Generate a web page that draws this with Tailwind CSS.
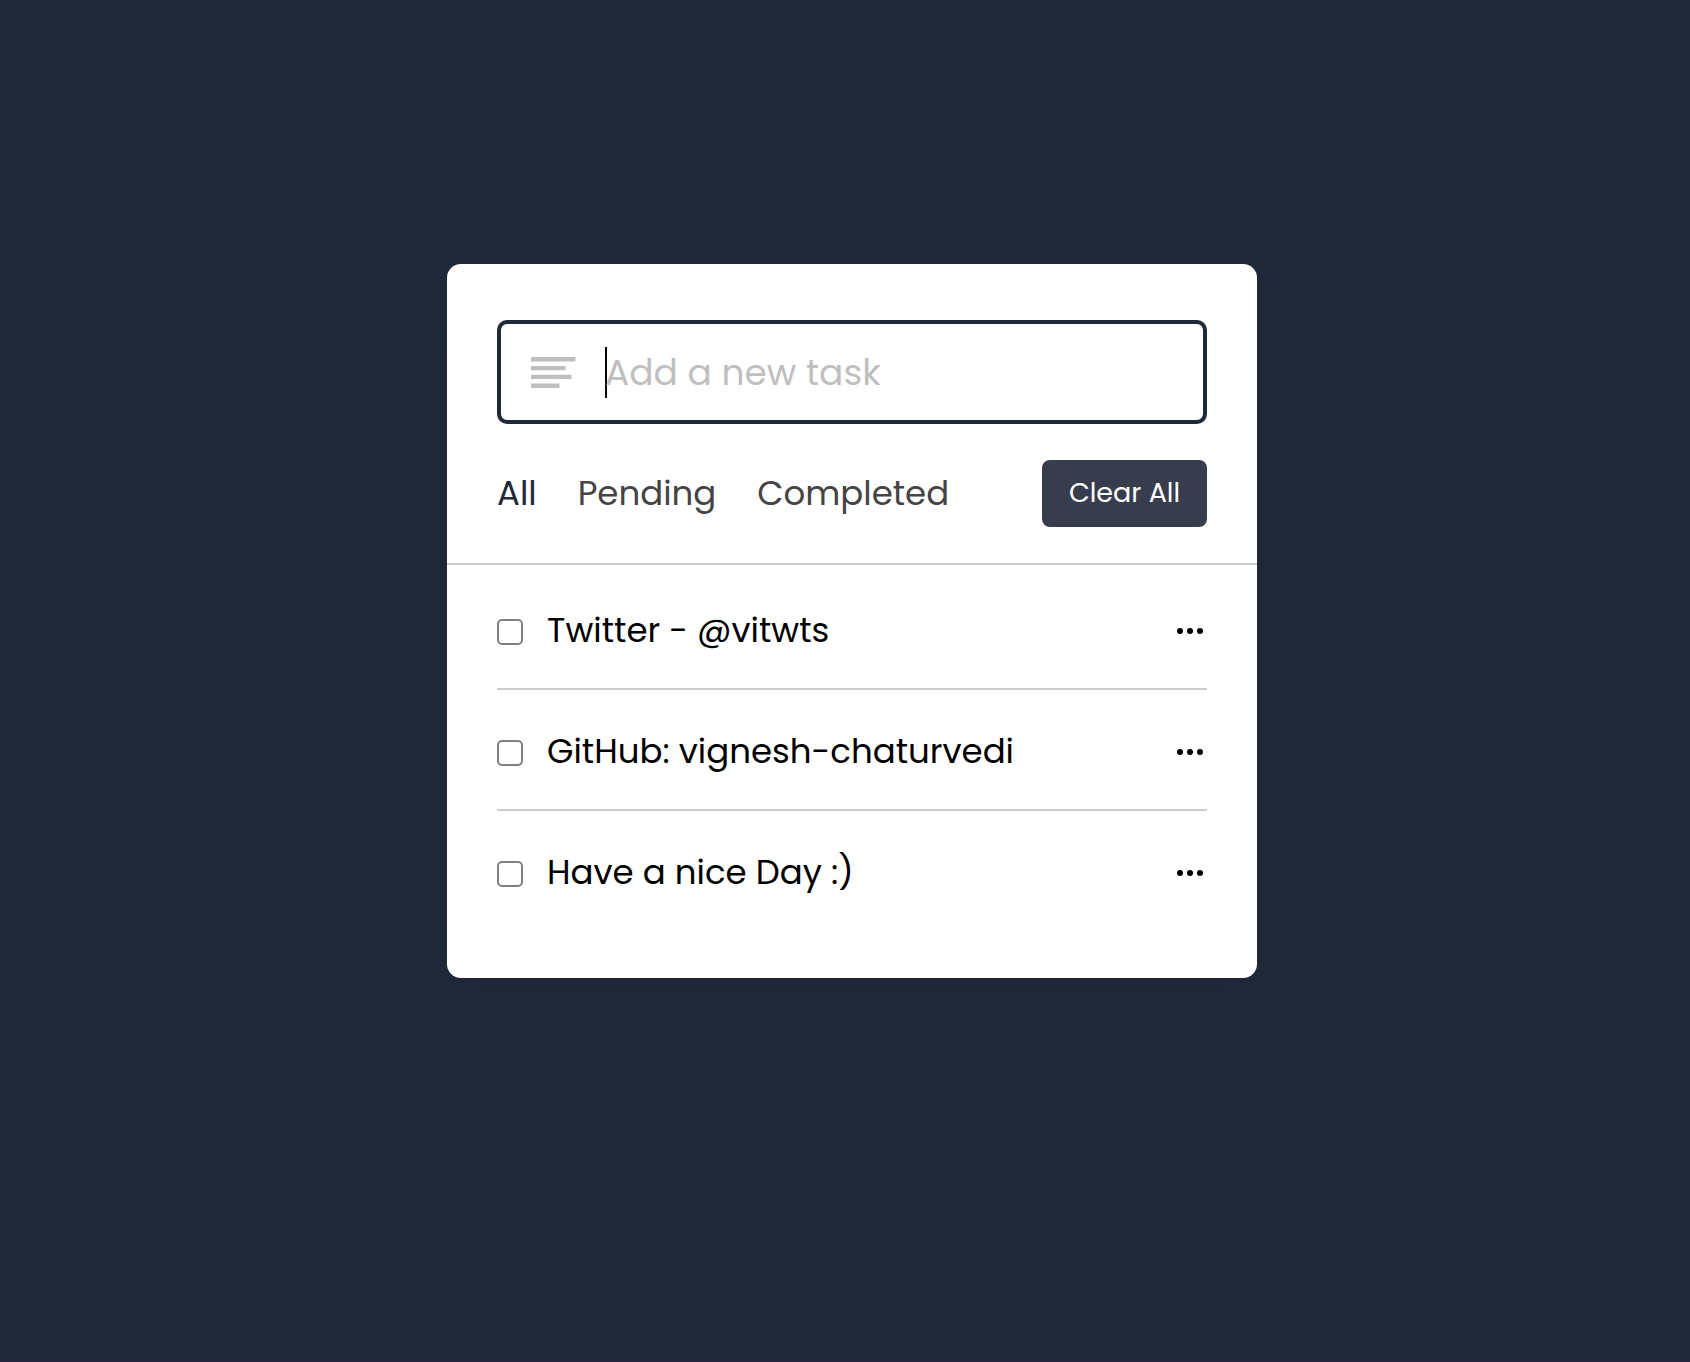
<!DOCTYPE html>
<html lang="en">
<head>
<meta charset="utf-8">
<meta name="viewport" content="width=device-width, initial-scale=1">
<title>Todo List</title>
<script src="https://cdn.jsdelivr.net/npm/@tailwindcss/browser@4"></script>
</head>
<body class="min-h-screen border-b-2 border-[#24243a] bg-[#20293a] font-['Poppins','Inter',sans-serif]">
<main class="flex justify-center pt-[264px] pb-16 pl-[14px]">
  <section class="w-full max-w-[810px] rounded-[14px] bg-white pt-14 pb-[46px] shadow-[0_20px_60px_rgba(0,0,0,0.06)]">
    <div class="px-[50px]">
      <label class="flex h-[104px] items-center rounded-[10px] border-4 border-[#20293a] pl-[30px]">
        <svg class="h-8 w-[45px] shrink-0" viewBox="0 0 45 32" fill="#bfbfbf" aria-hidden="true">
          <path d="M0 1h44.500v4.500H0zM0 10h34.500v4.300H0zM0 18.700h40.500v4.300H0zM0 27.500h28.500v4.500H0z"/>
        </svg>
        <span class="-mr-0.5 ml-[29px] h-[51px] w-0.5 shrink-0 bg-black" aria-hidden="true"></span>
        <input type="text" aria-label="New task" placeholder="Add a new task" class="h-full min-w-0 flex-1 text-[36px] text-black outline-none placeholder:text-[#bfbfbf]">
      </label>
    </div>
    <div class="flex items-center justify-between border-b-2 border-[#cccccc] px-[50px] py-9">
      <div class="flex gap-[41px] text-[34px] leading-[51px] text-[#444444]">
        <button type="button" class="text-[#20293a]">All</button>
        <button type="button">Pending</button>
        <button type="button">Completed</button>
      </div>
      <button type="button" class="h-[67px] w-[165px] rounded-lg bg-[#383d4d] text-[27px] text-white">Clear All</button>
    </div>
    <ul class="px-[50px] pt-1 text-[34px] text-black">
      <li class="flex h-[121px] items-center justify-between border-b-2 border-[#cccccc] pt-1">
        <label class="flex items-center gap-6">
          <input type="checkbox" class="mt-0.5 size-[26px] appearance-none rounded-[5px] border-2 border-[#808080] bg-white">
          <span class="leading-[51px]">Twitter - @vitwts</span>
        </label>
        <button type="button" aria-label="Task options" class="pr-1">
          <svg class="h-2 w-[26px]" viewBox="0 0 26 8" aria-hidden="true"><circle cx="3" cy="4" r="3"/><circle cx="13" cy="4" r="3"/><circle cx="23" cy="4" r="3"/></svg>
        </button>
      </li>
      <li class="flex h-[121px] items-center justify-between border-b-2 border-[#cccccc] pt-1">
        <label class="flex items-center gap-6">
          <input type="checkbox" class="mt-0.5 size-[26px] appearance-none rounded-[5px] border-2 border-[#808080] bg-white">
          <span class="leading-[51px]">GitHub: vignesh-chaturvedi</span>
        </label>
        <button type="button" aria-label="Task options" class="pr-1">
          <svg class="h-2 w-[26px]" viewBox="0 0 26 8" aria-hidden="true"><circle cx="3" cy="4" r="3"/><circle cx="13" cy="4" r="3"/><circle cx="23" cy="4" r="3"/></svg>
        </button>
      </li>
      <li class="flex h-[121px] items-center justify-between border-b-2 border-transparent pt-1">
        <label class="flex items-center gap-6">
          <input type="checkbox" class="mt-0.5 size-[26px] appearance-none rounded-[5px] border-2 border-[#808080] bg-white">
          <span class="leading-[51px]">Have a nice Day :)</span>
        </label>
        <button type="button" aria-label="Task options" class="pr-1">
          <svg class="h-2 w-[26px]" viewBox="0 0 26 8" aria-hidden="true"><circle cx="3" cy="4" r="3"/><circle cx="13" cy="4" r="3"/><circle cx="23" cy="4" r="3"/></svg>
        </button>
      </li>
    </ul>
  </section>
</main>
</body>
</html>
